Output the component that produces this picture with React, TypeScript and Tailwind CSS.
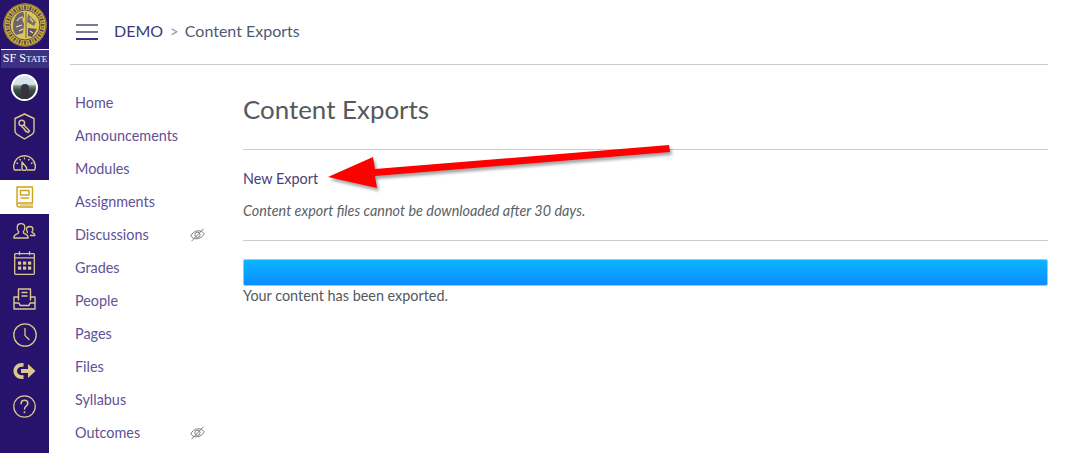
import React from "react";

const gold = "#dcc88c";

function Seal() {
  const ticks = Array.from({ length: 40 }, (_, i) => i * 9);
  return (
    <svg width="44" height="44" viewBox="0 0 44 44">
      <circle cx="22" cy="22" r="21.700" fill="#c9ad45" />
      <circle cx="22" cy="22" r="21" fill="none" stroke="#77683a" strokeWidth="1" />
      {ticks.map((a) => (
        <rect key={a} x="21.200" y="2.500" width="1.600" height="3.600" fill={a % 18 === 0 ? "#4a3c52" : "#8a7630"} transform={`rotate(${a} 22 22)`} />
      ))}
      <circle cx="22" cy="22" r="15" fill="#dcc558" stroke="#5a4d55" strokeWidth="1" />
      <path d="M10 24C10 14 15 9 20 9c2 3 1 6-1 7l2 5-1 9-7 2c-2-2-3-5-3-8z" fill="#6d6470" />
      <path d="M25 11l8 8-2 4-7-4z" fill="#7a7068" />
      <path d="M25 25l9 1-5 8-4-1z" fill="#5d5468" />
      <path d="M14 18c2-3 4-4 6-4M13 24l6-2M16 28l4-2M27 15l3 4M27 28l3 2" stroke="#f0e3a0" strokeWidth="1.200" fill="none" />
      <path d="M23 9v26" stroke="#4f4560" strokeWidth=".8" />
    </svg>
  );
}

function Shield() {
  return (
    <svg width="21" height="27" viewBox="0 0 21 27" fill="none" stroke={gold} strokeWidth="1.400" strokeLinejoin="round" strokeLinecap="round">
      <path d="M10.500 1 20 5.500V18c0 1.500-.8 2.500-2 3.300L10.500 26 3 21.300C1.800 20.500 1 19.500 1 18V5.500z" />
      <circle cx="7.800" cy="10" r="2.800" />
      <path d="M9.800 12 15.500 18 14 19.500l-1.300-1-.8.200-.5-1.300-1-.4-.2-1.300-2.500-2" />
    </svg>
  );
}

function Gauge() {
  return (
    <svg width="23" height="16" viewBox="0 0 23 16" fill="none" stroke={gold} strokeWidth="1.400" strokeLinecap="round" strokeLinejoin="round">
      <path d="M8 15H1.500C.7 13.500.5 11.800.8 10 1.800 4.500 6 .8 11.500.8S21.200 4.500 22.200 10c.3 1.800.1 3.500-.7 5H14.500" />
      <path d="M9 7 13.500 12.500c.5 1.500-.5 3-2.200 3S8.700 14 9 12.500z" />
      <path d="M4 8l.5.400M19 8l-.5.400M11.500 3.300v.5M7 4.500l.3.400M16 4.500l-.3.400" />
    </svg>
  );
}

function Book() {
  return (
    <svg width="18" height="22" viewBox="0 0 18 22" fill="none" stroke="#cfa31a" strokeWidth="1.400" strokeLinejoin="round">
      <path d="M1 18V1h15.500v16H3.500C2 17 1 18 1 19s1 2 2.500 2H17" />
      <rect x="4.500" y="4.500" width="8.500" height="4.500" />
      <path d="M4.500 12h8.500" />
      <path d="M4 19h13" strokeWidth="1" />
    </svg>
  );
}

function People() {
  return (
    <svg width="23" height="16" viewBox="0 0 23 16" fill="none" stroke={gold} strokeWidth="1.300" strokeLinejoin="round">
      <path d="M.8 15c0-2.500 1.300-3.500 3.400-4.200 1.300-.4 1.600-.8 1.500-2C4.500 7.800 4.200 6 4.200 4.500 4.200 2 5.800.7 8 .7s3.800 1.300 3.800 3.800c0 1.500-.3 3.300-1.500 4.300-.1 1.200.2 1.600 1.500 2 2.100.7 3.400 1.700 3.400 4.200z" />
      <path d="M14 10c.5-.4.600-.8.500-1.300-.9-.8-1.100-1.700-1-2.700.1-1.500 1.300-2.500 3.200-2.500s3.100 1 3.200 2.500c.1 1-.1 1.900-1 2.700 0 .8.200 1 .9 1.200 1.300.4 2.100 1.100 2.100 2.600h-5" />
    </svg>
  );
}

function Calendar() {
  const cells = [0, 1, 2].flatMap((c) => [0, 1].map((r) => [c, r]));
  return (
    <svg width="21" height="24" viewBox="0 0 21 24" fill="none" stroke={gold} strokeWidth="1.300">
      <rect x=".7" y="2.700" width="19.600" height="20.600" rx=".8" />
      <path d="M5.500 .3v4M15.500 .3v4M.7 6.800h19.600" />
      {cells.map(([c, r]) => (
        <rect key={`${c}${r}`} x={4 + c * 5} y={10.500 + r * 5} width="3.200" height="3.200" fill={gold} stroke="none" />
      ))}
    </svg>
  );
}

function Inbox() {
  return (
    <svg width="23" height="22" viewBox="0 0 23 22" fill="none" stroke={gold} strokeWidth="1.400" strokeLinejoin="round">
      <path d="M5.500 12.500V1h12v11.500" />
      <path d="M8.500 4.500h6M8.500 8h6" />
      <path d="M5.500 9H1v12h21V9h-4.500" />
      <path d="M1 15h5l1 2.500h9l1-2.500h5" />
    </svg>
  );
}

function Clock() {
  return (
    <svg width="24" height="24" viewBox="0 0 24 24" fill="none" stroke={gold} strokeWidth="1.300" strokeLinecap="round">
      <circle cx="12" cy="12" r="11.200" />
      <path d="M12 5.500V12.500l4 4" />
    </svg>
  );
}

function Logout() {
  return (
    <svg width="23" height="18" viewBox="0 0 23 18" fill={gold}>
      <path d="M9 1C4 1 .5 4.500.5 9S4 17 9 17h1.500v-3.800H9C6 13.200 4 11.500 4 9s2-4.200 5-4.200h1.500V1z" />
      <path d="M8 7h7V2l7.500 7-7.500 7v-5H8z" />
    </svg>
  );
}

function Help() {
  return (
    <svg width="23" height="23" viewBox="0 0 24 24" fill="none" stroke={gold} strokeWidth="1.300" strokeLinecap="round">
      <circle cx="12" cy="12" r="11.200" />
      <path d="M8.500 9c0-2.300 1.500-3.500 3.500-3.500s3.500 1.200 3.500 3.200c0 2.800-3.500 2.800-3.500 6" strokeWidth="1.600" />
      <circle cx="12" cy="18" r="1" fill={gold} stroke="none" />
    </svg>
  );
}

function Avatar() {
  return (
    <div className="w-[27px] h-[27px] rounded-full border-2 border-white overflow-hidden bg-[linear-gradient(180deg,#d6e2ea_0%,#d6e2ea_36%,#6f8f7c_44%,#3a5142_60%,#22302b_100%)] flex items-end justify-center">
      <div className="w-[8px] h-[15px] rounded-t-full bg-[#3a3240]" />
    </div>
  );
}

function EyeOff() {
  return (
    <svg width="15" height="14" viewBox="0 0 15 14" fill="none" stroke="#7f7f7f" strokeWidth="1">
      <path d="M.8 8C2 5 5 3 8 2.800c2.500-.2 5 1 6.200 3C13 8.500 10 10.500 7 10.800 4.500 11 2 10 .8 8z" />
      <circle cx="7.500" cy="6.800" r="2.600" />
      <path d="M13.500 .8 1.500 13.200" />
    </svg>
  );
}

const rail = [
  { n: <Shield />, h: "h-[38px]" },
  { n: <Gauge />, h: "h-[35px]" },
];
const railAfter = [
  { n: <People />, h: "h-[33px]" },
  { n: <Calendar />, h: "h-[32px]" },
  { n: <Inbox />, h: "h-[40px]" },
  { n: <Clock />, h: "h-[32px]" },
  { n: <Logout />, h: "h-[40px]" },
  { n: <Help />, h: "h-[30px]" },
];

const nav: [string, boolean][] = [
  ["Home", false],
  ["Announcements", false],
  ["Modules", false],
  ["Assignments", false],
  ["Discussions", true],
  ["Grades", false],
  ["People", false],
  ["Pages", false],
  ["Files", false],
  ["Syllabus", false],
  ["Outcomes", true],
];

export default function App() {
  return (
    <div className="relative flex w-[1068px] h-[453px] overflow-hidden bg-white font-['Lato','Noto_Sans',sans-serif] text-[#4f5257]">
      <aside className="w-[49px] shrink-0 bg-[#27136b] flex flex-col items-stretch">
        <div className="h-[49px] flex items-center justify-center">
          <Seal />
        </div>
        <div className="ml-px h-[19px] bg-[#3b3282] border-t border-white text-white text-center font-['Liberation_Serif',serif] text-[12px] leading-[17px] whitespace-nowrap overflow-hidden">
          SF S<span className="text-[9px]">TATE</span>
        </div>
        <div className="h-[39px] flex items-center justify-center">
          <Avatar />
        </div>
        {rail.map((r, i) => (
          <div key={i} className={`${r.h} flex items-center justify-center`}>
            {r.n}
          </div>
        ))}
        <div className="h-[34px] bg-white flex items-center justify-center">
          <Book />
        </div>
        {railAfter.map((r, i) => (
          <div key={i} className={`${r.h} flex items-center justify-center`}>
            {r.n}
          </div>
        ))}
      </aside>

      <div className="flex-1 min-w-0 pl-[21px] pr-5">
        <header className="h-[65px] border-b border-[#c7cdd1] flex items-center pl-[6px]">
          <div className="w-[22px] flex flex-col gap-[5px]">
            <span className="h-[2px] bg-[#7a7a92]" />
            <span className="h-[2px] bg-[#7a7a92]" />
            <span className="h-[2px] bg-[#3d2a85]" />
          </div>
          <div className="ml-4 pb-[2px] flex items-center">
            <span className="text-[16px] text-[#3f3a7a]">DEMO</span>
            <span className="ml-[7px] mr-[6px] text-[15px] text-[#8b969e]">&gt;</span>
            <span className="text-[16px] text-[#4f5a73]">Content Exports</span>
          </div>
        </header>

        <div className="flex">
          <nav className="w-[173px] shrink-0 pt-[21px] pl-[5px] pr-[38px]">
            {nav.map(([label, hidden]) => (
              <div key={label} className="h-[33px] flex items-center justify-between text-[14.400px] text-[#5f5296]">
                <span>{label}</span>
                {hidden && <EyeOff />}
              </div>
            ))}
          </nav>

          <main className="flex-1 min-w-0">
            <h1 className="mt-[26px] mb-[22px] text-[25.900px] leading-[36px] text-[#55585c] font-normal">Content Exports</h1>
            <hr className="border-[#c7cdd1]" />
            <a className="block mt-[20px] text-[14.400px] leading-[17px] text-[#4a3f78]">New Export</a>
            <p className="mt-[15px] text-[14.400px] leading-[17px] italic text-[#5a5f66]">
              Content export files cannot be downloaded after 30 days.
            </p>
            <hr className="mt-[21px] border-[#c7cdd1]" />
            <div className="mt-[18px] h-[27px] rounded-[2px] border border-[#b9c2c8] bg-[linear-gradient(180deg,#0ab5ff_0%,#0a8dff_100%)]" />
            <p className="text-[14.400px] leading-[20px] text-[#55585c]">Your content has been exported.</p>
          </main>
        </div>
      </div>

      <svg className="absolute left-[320px] top-[135px] pointer-events-none" width="360" height="65" viewBox="320 135 360 65">
        <path d="M328 177 373 157 375 169 669 145 670 152 375 176 377 188z" fill="#000" opacity="0.35" transform="translate(2 3)" style={{ filter: "blur(1.500px)" }} />
        <path d="M328 177 373 157 375 169 669 145 670 152 375 176 377 188z" fill="#ff0000" />
      </svg>
    </div>
  );
}
